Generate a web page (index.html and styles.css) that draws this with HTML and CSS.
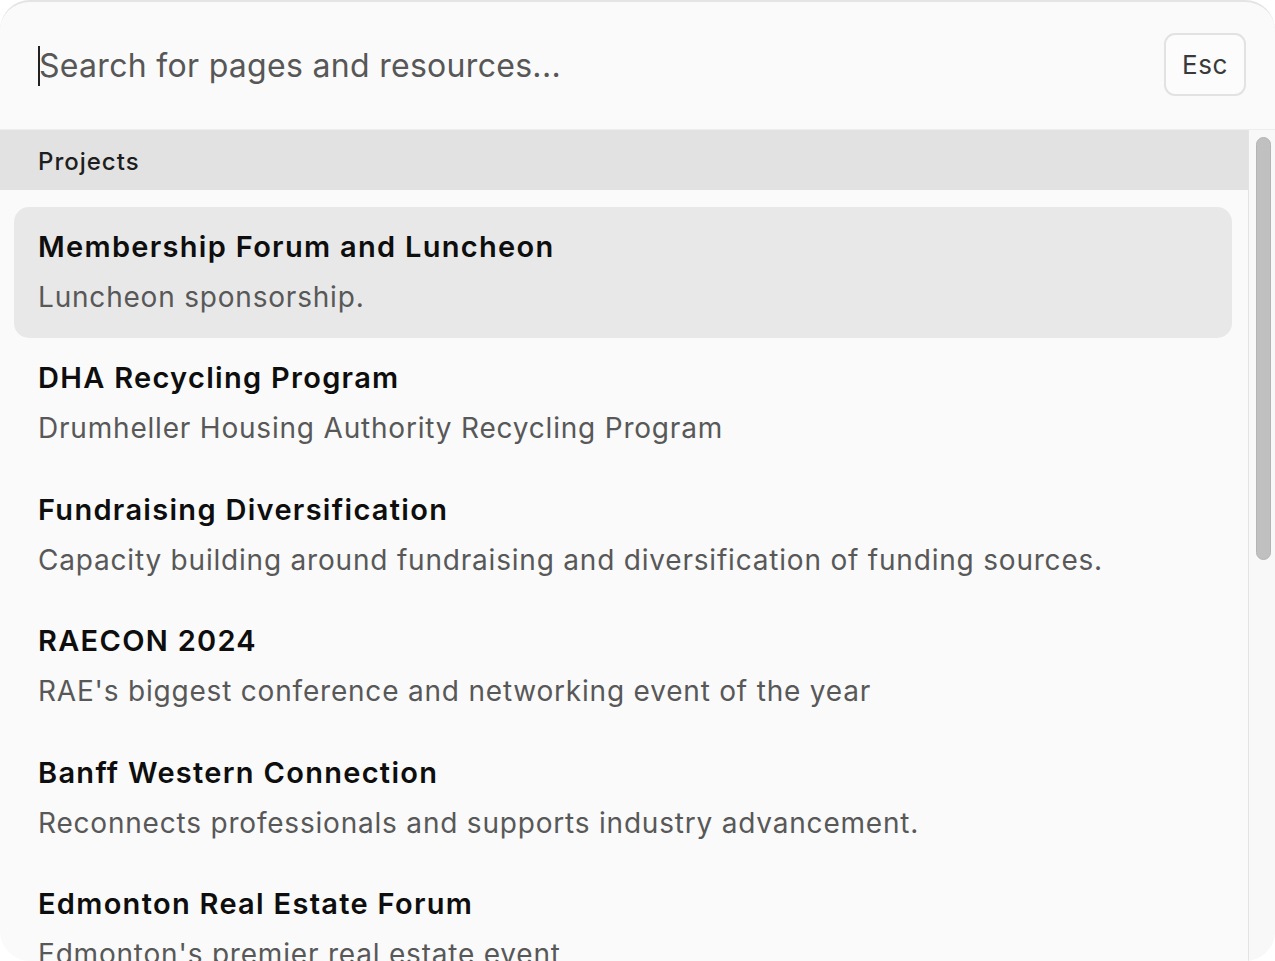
FILE: index.html
```html
<!DOCTYPE html>
<html lang="en">
	<head>
		<meta charset="UTF-8">
		<title>Search</title>
		<meta name="viewport" content="width=device-width, initial-scale=1">

		<link rel="stylesheet" href="styles.css">

	</head>
	<body>
		<main class="palette">
			<header class="search-bar">
				<div class="search-field">
					<span class="caret"></span>
					<span class="placeholder">Search for pages and resources...</span>
				</div>
				<button class="esc">Esc</button>
			</header>

			<div class="results-wrap">
				<div class="results">
					<div class="group-title">Projects</div>
					<ul class="items">
						<li class="item active">
							<div class="item-title">Membership Forum and Luncheon</div>
							<div class="item-desc">Luncheon sponsorship.</div>
						</li>
						<li class="item">
							<div class="item-title">DHA Recycling Program</div>
							<div class="item-desc">Drumheller Housing Authority Recycling Program</div>
						</li>
						<li class="item">
							<div class="item-title">Fundraising Diversification</div>
							<div class="item-desc">Capacity building around fundraising and diversification of funding sources.</div>
						</li>
						<li class="item">
							<div class="item-title">RAECON 2024</div>
							<div class="item-desc">RAE's biggest conference and networking event of the year</div>
						</li>
						<li class="item">
							<div class="item-title">Banff Western Connection</div>
							<div class="item-desc">Reconnects professionals and supports industry advancement.</div>
						</li>
						<li class="item">
							<div class="item-title">Edmonton Real Estate Forum</div>
							<div class="item-desc">Edmonton's premier real estate event</div>
						</li>
					</ul>
				</div>
				<div class="scrollbar">
					<div class="thumb"></div>
				</div>
			</div>
		</main>
	</body>
</html>
```

FILE: styles.css
```css
html, body {
	margin: 0;
	padding: 0;
	height: 100%;
	background-color: #ffffff;
	font-family: "Inter", "Noto Sans", sans-serif;
}

.palette {
	height: 100vh;
	box-sizing: border-box;
	display: flex;
	flex-direction: column;
	background-color: #fafafa;
	border-top: 2px solid #e4e4e4;
	border-radius: 30px;
	overflow: hidden;
}

.search-bar {
	height: 128px;
	box-sizing: border-box;
	display: flex;
	align-items: center;
	justify-content: space-between;
	padding: 0 29px 0 38px;
	border-bottom: 1px solid #ededed;
	flex-shrink: 0;
}

.search-field {
	display: flex;
	align-items: center;
	font-size: 32px;
	letter-spacing: 0.3px;
	color: #575757;
}

.caret {
	width: 2px;
	height: 40px;
	background-color: #222;
	margin-right: -1px;
}

.esc {
	all: unset;
	width: 82px;
	height: 63px;
	box-sizing: border-box;
	border: 2px solid #e2e2e2;
	border-radius: 11px;
	background-color: #fcfcfc;
	text-align: center;
	font-size: 26px;
	letter-spacing: 0.6px;
	color: #3a3a3a;
	margin-top: -2px;
}

.results-wrap {
	flex: 1;
	min-height: 0;
	display: flex;
}

.results {
	flex: 1;
	overflow: hidden;
}

.scrollbar {
	width: 27px;
	box-sizing: border-box;
	padding: 7px 4px 0 7px;
	background-color: #f8f8f8;
	border-left: 1px solid #e4e4e4;
}

.thumb {
	height: 423px;
	box-sizing: border-box;
	background-color: #c0c0c0;
	border: 1px solid #b4b4b4;
	border-radius: 8px;
}

.group-title {
	height: 60px;
	display: flex;
	align-items: center;
	padding-left: 38px;
	padding-top: 2px;
	box-sizing: border-box;
	background-color: #e2e2e2;
	font-size: 24px;
	font-weight: 500;
	letter-spacing: 1px;
	color: #1e1e1e;
}

.items {
	list-style: none;
	margin: 0;
	padding: 17px 16px 0 14px;
}

.item {
	height: 131.4px;
	box-sizing: border-box;
	padding: 22px 24px 0;
	border-radius: 15px;
}

.item.active {
	background-color: #e8e8e8;
}

.item-title {
	font-size: 29px;
	line-height: 36px;
	font-weight: 600;
	letter-spacing: 1.3px;
	color: #0e0e0e;
}

.item-desc {
	margin-top: 14px;
	font-size: 28px;
	line-height: 36px;
	letter-spacing: 0.8px;
	color: #585858;
}
```
